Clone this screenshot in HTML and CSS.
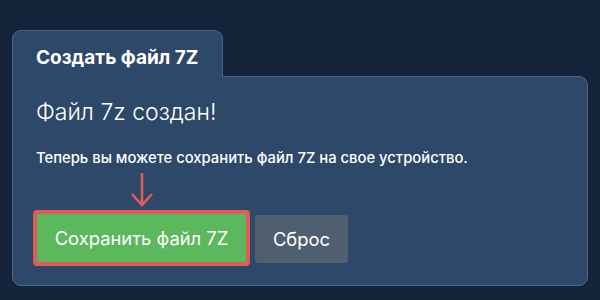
FILE: index.html
```html
<!DOCTYPE html>
<html lang="ru">

<head>
    <meta charset="UTF-8">
    <title>Создать файл 7Z</title>
    <link rel="stylesheet" href="styles.css">
</head>

<body>
    <div class="wrap">
        <div class="tab">Создать файл 7Z</div>
        <div class="panel">
            <h2 class="title">Файл 7z создан!</h2>
            <p class="text">Теперь вы можете сохранить файл 7Z на свое устройство.</p>
            <div class="actions">
                <div class="highlight">
                    <svg class="arrow" width="24" height="36" viewBox="0 0 24 36">
                        <path d="M12 1 V33 M2 22 L12 33 L22 22" fill="none" stroke="#e05c58" stroke-width="2.6" />
                    </svg>
                    <div class="ring">
                        <button class="btn save">Сохранить файл 7Z</button>
                    </div>
                </div>
                <button class="btn reset">Сброс</button>
            </div>
        </div>
    </div>
</body>

</html>
```

FILE: styles.css
```css
body {
    margin: 0;
    background-color: #12233a;
    font-family: Inter, "Noto Sans", sans-serif;
    color: #ffffff;
}

.wrap {
    padding: 30px 12px 14px 12px;
}

.tab {
    display: inline-block;
    box-sizing: border-box;
    width: 211px;
    height: 47px;
    padding: 15px 0 0 23px;
    background-color: #2d4868;
    border: 1px solid #4d6686;
    border-bottom: none;
    border-radius: 9px 9px 0 0;
    font-size: 19px;
    line-height: 23px;
    font-weight: 700;
    position: relative;
    z-index: 1;
    margin-bottom: -1px;
}

.panel {
    background-color: #2d4868;
    border: 1px solid #4d6686;
    border-radius: 0 9px 9px 9px;
    padding: 21px 23px 19px 23px;
}

.title {
    margin: 0;
    font-size: 23px;
    font-weight: 300;
    line-height: 28px;
}

.text {
    margin: 23px 0 0 0;
    font-size: 14.8px;
    font-weight: 500;
    line-height: 18px;
}

.actions {
    display: flex;
    align-items: flex-end;
    margin-top: 5px;
}

.highlight {
    display: flex;
    flex-direction: column;
    align-items: center;
    margin-left: -3px;
}

.arrow {
    display: block;
    margin-bottom: 2px;
}

.ring {
    border: 4px solid #e05c58;
    border-radius: 4px;
}

.btn {
    font-family: Inter, "Noto Sans", sans-serif;
    font-size: 18.4px;
    color: #ffffff;
    border: none;
    height: 48px;
    display: block;
}

.save {
    background-color: #5cb85c;
    width: 209px;
    border-radius: 1px;
}

.reset {
    background-color: #4f5f70;
    width: 93px;
    border-radius: 3px;
    margin-left: 5px;
    margin-bottom: 3px;
}
```
